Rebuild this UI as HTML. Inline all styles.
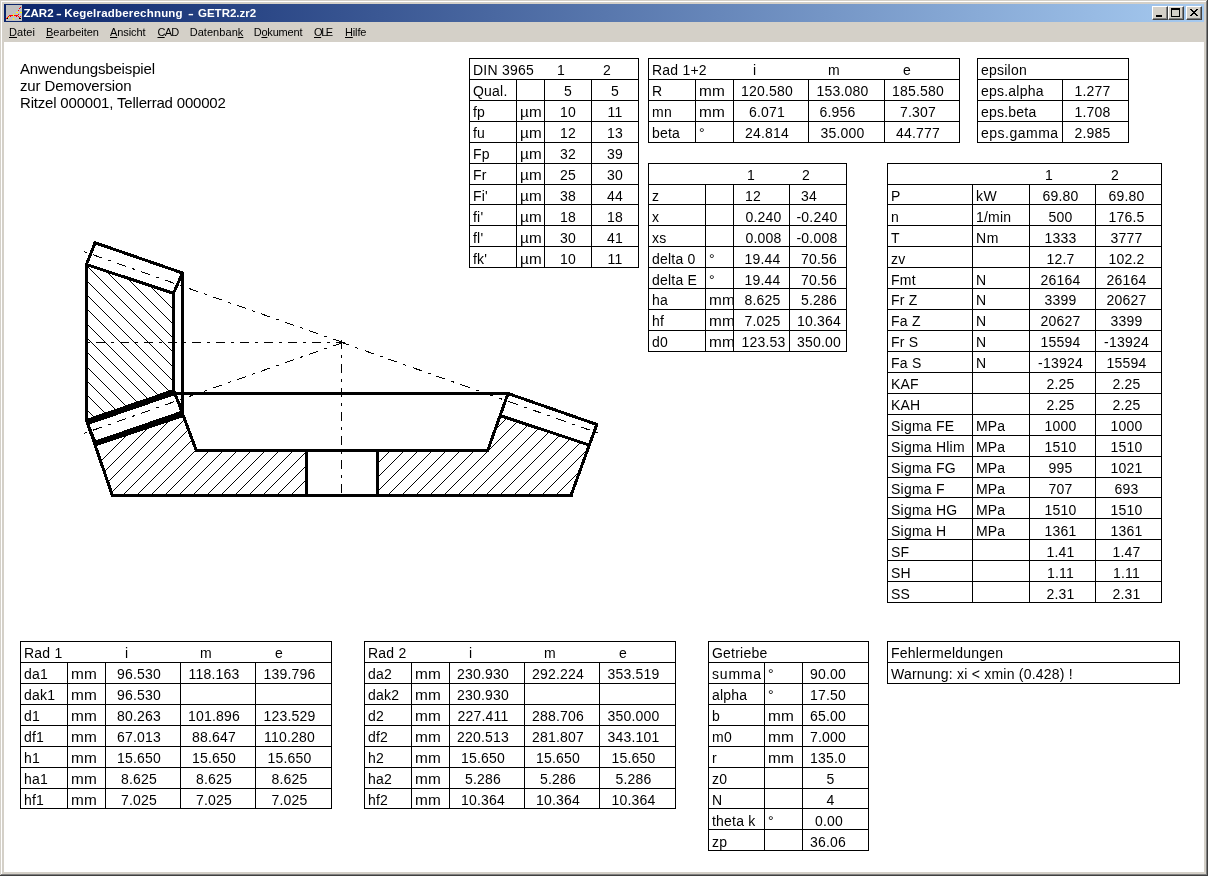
<!DOCTYPE html>
<html lang="de"><head><meta charset="utf-8"><title>ZAR2 - Kegelradberechnung - GETR2.zr2</title>
<style>
html,body{margin:0;padding:0}
body{width:1208px;height:876px;overflow:hidden;position:relative;background:#d4d0c8;font-family:"Liberation Sans",sans-serif;color:#000}
.abs,.l,.t{position:absolute}
.l{background:#000}
.t{font-size:14px;line-height:21px;height:21px;white-space:pre;letter-spacing:0.22px}
.c{transform:translateX(-50%)}
#content{position:absolute;left:0;top:0;width:1208px;height:876px;will-change:transform}
#client{position:absolute;left:4px;top:42px;width:1200px;height:830px;background:#fff}
#title{position:absolute;left:4px;top:4px;width:1200px;height:18px;background:linear-gradient(to right,#0a246a 0%,#a6caf0 100%)}
#title .cap{position:absolute;left:20px;top:0;height:18px;line-height:18px;font-size:11.5px;font-weight:bold;color:#fff;white-space:pre;letter-spacing:0.03px}
.menu{position:absolute;top:22px;height:19px;line-height:20px;font-size:11px;white-space:pre}
.menu u{text-decoration:underline;text-underline-offset:1px}
.btn{position:absolute;top:2px;width:16px;height:14px;background:#d4d0c8;box-sizing:border-box;border:1px solid;border-color:#fff #404040 #404040 #fff;box-shadow:inset -1px -1px 0 #808080}
</style></head><body>

<div class="abs" style="left:1px;top:1px;width:1205px;height:1px;background:#fff"></div>
<div class="abs" style="left:1px;top:1px;width:1px;height:873px;background:#fff"></div>
<div class="abs" style="left:1px;top:874px;width:1206px;height:1px;background:#808080"></div>
<div class="abs" style="left:1206px;top:1px;width:1px;height:874px;background:#808080"></div>
<div class="abs" style="left:0px;top:875px;width:1208px;height:1px;background:#404040"></div>
<div class="abs" style="left:1207px;top:0px;width:1px;height:876px;background:#404040"></div>
<div id="content">
<div id="title">
<svg class="abs" style="left:2px;top:1px" width="16" height="16" viewBox="0 0 16 16" shape-rendering="crispEdges"><rect width="16" height="16" fill="#c0c0c0"/><path fill="#f00" d="M14,2h1v1h-1zM13,3h1v1h-1zM12,5h1v1h-1zM12,9h1v1h-1zM3,10h1v1h-1zM4,10h1v1h-1zM5,10h1v1h-1zM6,10h1v1h-1zM8,10h1v1h-1zM9,10h1v1h-1zM10,10h1v1h-1zM11,10h1v1h-1zM2,11h1v1h-1zM4,11h1v1h-1zM10,11h1v1h-1zM12,11h1v1h-1zM14,11h1v1h-1zM1,12h1v1h-1zM13,12h1v1h-1zM0,13h1v1h-1z"/><path fill="#ff0" d="M10,7h1v1h-1zM11,7h1v1h-1zM14,7h1v1h-1zM15,7h1v1h-1zM7,9h1v1h-1zM7,10h1v1h-1zM2,12h1v1h-1zM7,13h1v1h-1zM7,14h1v1h-1z"/><path fill="#000" d="M1,13h1v1h-1zM13,13h1v1h-1zM14,13h1v1h-1z"/></svg>
<span class="cap" style="left:19.5px;letter-spacing:0px;">ZAR2</span>
<span class="cap" style="left:52.2px;letter-spacing:0px;transform:scaleX(1.5);transform-origin:0 0;">-</span>
<span class="cap" style="left:60.2px;letter-spacing:0.2px;">Kegelradberechnung</span>
<span class="cap" style="left:183.5px;letter-spacing:0px;transform:scaleX(1.5);transform-origin:0 0;">-</span>
<span class="cap" style="left:194px;letter-spacing:0px;">GETR2.zr2</span>
<div class="btn" style="left:1148px"><div class="abs" style="left:3px;top:8px;width:6px;height:2px;background:#000"></div></div>
<div class="btn" style="left:1164px"><div class="abs" style="left:2px;top:1px;width:9px;height:9px;box-sizing:border-box;border:1px solid #000;border-top-width:2px"></div></div>
<div class="btn" style="left:1182px"><svg class="abs" style="left:3px;top:2px" width="8" height="7" viewBox="0 0 8 7" shape-rendering="crispEdges"><path d="M0 0h2v1h1v1h2v-1h1v-1h2v1h-1v1h-1v1h-1v1h1v1h1v1h1v1h-2v-1h-1v-1h-2v1h-1v1h-2v-1h1v-1h1v-1h1v-1h-1v-1h-1v-1h-1z" fill="#000"/></svg></div>
</div>
<span class="menu" style="left:9px;letter-spacing:0.05px"><u>D</u>atei</span>
<span class="menu" style="left:46px;letter-spacing:-0.04px"><u>B</u>earbeiten</span>
<span class="menu" style="left:110px;letter-spacing:-0.1px"><u>A</u>nsicht</span>
<span class="menu" style="left:157.5px;letter-spacing:-0.8px"><u>C</u>AD</span>
<span class="menu" style="left:189.7px;letter-spacing:0.05px">Datenban<u>k</u></span>
<span class="menu" style="left:253.7px;letter-spacing:-0.2px">D<u>o</u>kument</span>
<span class="menu" style="left:314px;letter-spacing:-1.4px"><u>O</u>LE</span>
<span class="menu" style="left:345px;letter-spacing:-0.15px"><u>H</u>ilfe</span>
<div id="client"></div>
<span class="t" style="left:20px;top:60px;font-size:15px;line-height:17px;height:17px;letter-spacing:-0.15px">Anwendungsbeispiel</span>
<span class="t" style="left:20px;top:77px;font-size:15px;line-height:17px;height:17px;letter-spacing:-0.13px">zur Demoversion</span>
<span class="t" style="left:20px;top:94px;font-size:15px;line-height:17px;height:17px;letter-spacing:-0.19px">Ritzel 000001, Tellerrad 000002</span>
<div class="l" style="left:469px;top:58px;width:170px;height:1px"></div>
<div class="l" style="left:469px;top:79px;width:170px;height:1px"></div>
<div class="l" style="left:469px;top:100px;width:170px;height:1px"></div>
<div class="l" style="left:469px;top:121px;width:170px;height:1px"></div>
<div class="l" style="left:469px;top:142px;width:170px;height:1px"></div>
<div class="l" style="left:469px;top:163px;width:170px;height:1px"></div>
<div class="l" style="left:469px;top:184px;width:170px;height:1px"></div>
<div class="l" style="left:469px;top:204px;width:170px;height:1px"></div>
<div class="l" style="left:469px;top:225px;width:170px;height:1px"></div>
<div class="l" style="left:469px;top:246px;width:170px;height:1px"></div>
<div class="l" style="left:469px;top:267px;width:170px;height:1px"></div>
<div class="l" style="left:469px;top:58px;width:1px;height:210px"></div>
<div class="l" style="left:638px;top:58px;width:1px;height:210px"></div>
<div class="l" style="left:516px;top:79px;width:1px;height:189px"></div>
<div class="l" style="left:544px;top:79px;width:1px;height:189px"></div>
<div class="l" style="left:591px;top:79px;width:1px;height:189px"></div>
<span class="t" style="left:473px;top:60px;">DIN 3965</span>
<span class="t" style="left:557px;top:60px;">1</span>
<span class="t" style="left:603px;top:60px;">2</span>
<span class="t" style="left:473px;top:81px;">Qual.</span>
<span class="t c" style="left:568.0px;top:81px">5</span>
<span class="t c" style="left:615.0px;top:81px">5</span>
<span class="t" style="left:473px;top:102px;">fp</span>
<span class="t" style="left:520px;top:102px;transform:scaleX(1.09);transform-origin:0 0;">µm</span>
<span class="t c" style="left:568.0px;top:102px">10</span>
<span class="t c" style="left:615.0px;top:102px">11</span>
<span class="t" style="left:473px;top:123px;">fu</span>
<span class="t" style="left:520px;top:123px;transform:scaleX(1.09);transform-origin:0 0;">µm</span>
<span class="t c" style="left:568.0px;top:123px">12</span>
<span class="t c" style="left:615.0px;top:123px">13</span>
<span class="t" style="left:473px;top:144px;">Fp</span>
<span class="t" style="left:520px;top:144px;transform:scaleX(1.09);transform-origin:0 0;">µm</span>
<span class="t c" style="left:568.0px;top:144px">32</span>
<span class="t c" style="left:615.0px;top:144px">39</span>
<span class="t" style="left:473px;top:165px;">Fr</span>
<span class="t" style="left:520px;top:165px;transform:scaleX(1.09);transform-origin:0 0;">µm</span>
<span class="t c" style="left:568.0px;top:165px">25</span>
<span class="t c" style="left:615.0px;top:165px">30</span>
<span class="t" style="left:473px;top:186px;">Fi'</span>
<span class="t" style="left:520px;top:186px;transform:scaleX(1.09);transform-origin:0 0;">µm</span>
<span class="t c" style="left:568.0px;top:186px">38</span>
<span class="t c" style="left:615.0px;top:186px">44</span>
<span class="t" style="left:473px;top:207px;">fi'</span>
<span class="t" style="left:520px;top:207px;transform:scaleX(1.09);transform-origin:0 0;">µm</span>
<span class="t c" style="left:568.0px;top:207px">18</span>
<span class="t c" style="left:615.0px;top:207px">18</span>
<span class="t" style="left:473px;top:228px;">fl'</span>
<span class="t" style="left:520px;top:228px;transform:scaleX(1.09);transform-origin:0 0;">µm</span>
<span class="t c" style="left:568.0px;top:228px">30</span>
<span class="t c" style="left:615.0px;top:228px">41</span>
<span class="t" style="left:473px;top:249px;">fk'</span>
<span class="t" style="left:520px;top:249px;transform:scaleX(1.09);transform-origin:0 0;">µm</span>
<span class="t c" style="left:568.0px;top:249px">10</span>
<span class="t c" style="left:615.0px;top:249px">11</span>
<div class="l" style="left:648px;top:58px;width:312px;height:1px"></div>
<div class="l" style="left:648px;top:79px;width:312px;height:1px"></div>
<div class="l" style="left:648px;top:100px;width:312px;height:1px"></div>
<div class="l" style="left:648px;top:121px;width:312px;height:1px"></div>
<div class="l" style="left:648px;top:142px;width:312px;height:1px"></div>
<div class="l" style="left:648px;top:58px;width:1px;height:85px"></div>
<div class="l" style="left:959px;top:58px;width:1px;height:85px"></div>
<div class="l" style="left:695px;top:79px;width:1px;height:64px"></div>
<div class="l" style="left:733px;top:79px;width:1px;height:64px"></div>
<div class="l" style="left:808px;top:79px;width:1px;height:64px"></div>
<div class="l" style="left:884px;top:79px;width:1px;height:64px"></div>
<span class="t" style="left:652px;top:60px;">Rad 1+2</span>
<span class="t" style="left:753px;top:60px;">i</span>
<span class="t" style="left:828px;top:60px;">m</span>
<span class="t" style="left:903px;top:60px;">e</span>
<span class="t" style="left:652px;top:81px;">R</span>
<span class="t" style="left:699px;top:81px;transform:scaleX(1.1);transform-origin:0 0;">mm</span>
<span class="t c" style="left:767.0px;top:81px">120.580</span>
<span class="t c" style="left:842.5px;top:81px">153.080</span>
<span class="t c" style="left:918.0px;top:81px">185.580</span>
<span class="t" style="left:652px;top:102px;">mn</span>
<span class="t" style="left:699px;top:102px;transform:scaleX(1.1);transform-origin:0 0;">mm</span>
<span class="t c" style="left:767.0px;top:102px">6.071</span>
<span class="t c" style="left:837.5px;top:102px">6.956</span>
<span class="t c" style="left:918.0px;top:102px">7.307</span>
<span class="t" style="left:652px;top:123px;">beta</span>
<span class="t" style="left:699px;top:123px;">°</span>
<span class="t c" style="left:767.0px;top:123px">24.814</span>
<span class="t c" style="left:842.5px;top:123px">35.000</span>
<span class="t c" style="left:918.0px;top:123px">44.777</span>
<div class="l" style="left:977px;top:58px;width:152px;height:1px"></div>
<div class="l" style="left:977px;top:79px;width:152px;height:1px"></div>
<div class="l" style="left:977px;top:100px;width:152px;height:1px"></div>
<div class="l" style="left:977px;top:121px;width:152px;height:1px"></div>
<div class="l" style="left:977px;top:142px;width:152px;height:1px"></div>
<div class="l" style="left:977px;top:58px;width:1px;height:85px"></div>
<div class="l" style="left:1128px;top:58px;width:1px;height:85px"></div>
<div class="l" style="left:1062px;top:79px;width:1px;height:64px"></div>
<span class="t" style="left:981px;top:60px;">epsilon</span>
<span class="t" style="left:981px;top:81px;">eps.alpha</span>
<span class="t c" style="left:1092.5px;top:81px">1.277</span>
<span class="t" style="left:981px;top:102px;">eps.beta</span>
<span class="t c" style="left:1092.5px;top:102px">1.708</span>
<span class="t" style="left:981px;top:123px;letter-spacing:0.5px;">eps.gamma</span>
<span class="t c" style="left:1092.5px;top:123px">2.985</span>
<div class="l" style="left:648px;top:163px;width:199px;height:1px"></div>
<div class="l" style="left:648px;top:184px;width:199px;height:1px"></div>
<div class="l" style="left:648px;top:204px;width:199px;height:1px"></div>
<div class="l" style="left:648px;top:225px;width:199px;height:1px"></div>
<div class="l" style="left:648px;top:246px;width:199px;height:1px"></div>
<div class="l" style="left:648px;top:267px;width:199px;height:1px"></div>
<div class="l" style="left:648px;top:288px;width:199px;height:1px"></div>
<div class="l" style="left:648px;top:309px;width:199px;height:1px"></div>
<div class="l" style="left:648px;top:330px;width:199px;height:1px"></div>
<div class="l" style="left:648px;top:351px;width:199px;height:1px"></div>
<div class="l" style="left:648px;top:163px;width:1px;height:189px"></div>
<div class="l" style="left:846px;top:163px;width:1px;height:189px"></div>
<div class="l" style="left:705px;top:184px;width:1px;height:168px"></div>
<div class="l" style="left:733px;top:184px;width:1px;height:168px"></div>
<div class="l" style="left:789px;top:184px;width:1px;height:168px"></div>
<span class="t" style="left:747px;top:165px;">1</span>
<span class="t" style="left:802px;top:165px;">2</span>
<span class="t" style="left:652px;top:186px;">z</span>
<span class="t" style="left:745px;top:186px;">12</span>
<span class="t" style="left:801px;top:186px;">34</span>
<span class="t" style="left:652px;top:207px;">x</span>
<span class="t c" style="left:763.5px;top:207px">0.240</span>
<span class="t c" style="left:817.0px;top:207px">-0.240</span>
<span class="t" style="left:652px;top:228px;">xs</span>
<span class="t c" style="left:763.5px;top:228px">0.008</span>
<span class="t c" style="left:817.0px;top:228px">-0.008</span>
<span class="t" style="left:652px;top:249px;">delta 0</span>
<span class="t" style="left:709px;top:249px;width:24.00px;overflow:hidden">°</span>
<span class="t c" style="left:762.5px;top:249px">19.44</span>
<span class="t c" style="left:819.0px;top:249px">70.56</span>
<span class="t" style="left:652px;top:270px;">delta E</span>
<span class="t" style="left:709px;top:270px;width:24.00px;overflow:hidden">°</span>
<span class="t c" style="left:762.5px;top:270px">19.44</span>
<span class="t c" style="left:819.0px;top:270px">70.56</span>
<span class="t" style="left:652px;top:290px;">ha</span>
<span class="t" style="left:709px;top:290px;transform:scaleX(1.1);transform-origin:0 0;width:21.82px;overflow:hidden">mm</span>
<span class="t c" style="left:762.5px;top:290px">8.625</span>
<span class="t c" style="left:819.0px;top:290px">5.286</span>
<span class="t" style="left:652px;top:311px;">hf</span>
<span class="t" style="left:709px;top:311px;transform:scaleX(1.1);transform-origin:0 0;width:21.82px;overflow:hidden">mm</span>
<span class="t c" style="left:762.5px;top:311px">7.025</span>
<span class="t c" style="left:819.0px;top:311px">10.364</span>
<span class="t" style="left:652px;top:332px;">d0</span>
<span class="t" style="left:709px;top:332px;transform:scaleX(1.1);transform-origin:0 0;width:21.82px;overflow:hidden">mm</span>
<span class="t c" style="left:763.5px;top:332px">123.53</span>
<span class="t c" style="left:819.0px;top:332px">350.00</span>
<div class="l" style="left:887px;top:163px;width:275px;height:1px"></div>
<div class="l" style="left:887px;top:184px;width:275px;height:1px"></div>
<div class="l" style="left:887px;top:204px;width:275px;height:1px"></div>
<div class="l" style="left:887px;top:225px;width:275px;height:1px"></div>
<div class="l" style="left:887px;top:246px;width:275px;height:1px"></div>
<div class="l" style="left:887px;top:267px;width:275px;height:1px"></div>
<div class="l" style="left:887px;top:288px;width:275px;height:1px"></div>
<div class="l" style="left:887px;top:309px;width:275px;height:1px"></div>
<div class="l" style="left:887px;top:330px;width:275px;height:1px"></div>
<div class="l" style="left:887px;top:351px;width:275px;height:1px"></div>
<div class="l" style="left:887px;top:372px;width:275px;height:1px"></div>
<div class="l" style="left:887px;top:393px;width:275px;height:1px"></div>
<div class="l" style="left:887px;top:414px;width:275px;height:1px"></div>
<div class="l" style="left:887px;top:435px;width:275px;height:1px"></div>
<div class="l" style="left:887px;top:456px;width:275px;height:1px"></div>
<div class="l" style="left:887px;top:477px;width:275px;height:1px"></div>
<div class="l" style="left:887px;top:497px;width:275px;height:1px"></div>
<div class="l" style="left:887px;top:518px;width:275px;height:1px"></div>
<div class="l" style="left:887px;top:539px;width:275px;height:1px"></div>
<div class="l" style="left:887px;top:560px;width:275px;height:1px"></div>
<div class="l" style="left:887px;top:581px;width:275px;height:1px"></div>
<div class="l" style="left:887px;top:602px;width:275px;height:1px"></div>
<div class="l" style="left:887px;top:163px;width:1px;height:440px"></div>
<div class="l" style="left:1161px;top:163px;width:1px;height:440px"></div>
<div class="l" style="left:972px;top:184px;width:1px;height:419px"></div>
<div class="l" style="left:1029px;top:184px;width:1px;height:419px"></div>
<div class="l" style="left:1095px;top:184px;width:1px;height:419px"></div>
<span class="t" style="left:1045px;top:165px;">1</span>
<span class="t" style="left:1111px;top:165px;">2</span>
<span class="t" style="left:891px;top:186px;">P</span>
<span class="t" style="left:976px;top:186px;letter-spacing:0.4px;">kW</span>
<span class="t c" style="left:1060.5px;top:186px">69.80</span>
<span class="t c" style="left:1126.5px;top:186px">69.80</span>
<span class="t" style="left:891px;top:207px;">n</span>
<span class="t" style="left:976px;top:207px;">1/min</span>
<span class="t c" style="left:1060.5px;top:207px">500</span>
<span class="t c" style="left:1126.5px;top:207px">176.5</span>
<span class="t" style="left:891px;top:228px;">T</span>
<span class="t" style="left:976px;top:228px;letter-spacing:0.6px;">Nm</span>
<span class="t c" style="left:1060.5px;top:228px">1333</span>
<span class="t c" style="left:1126.5px;top:228px">3777</span>
<span class="t" style="left:891px;top:249px;">zv</span>
<span class="t c" style="left:1060.5px;top:249px">12.7</span>
<span class="t c" style="left:1126.5px;top:249px">102.2</span>
<span class="t" style="left:891px;top:270px;">Fmt</span>
<span class="t" style="left:976px;top:270px;">N</span>
<span class="t c" style="left:1060.5px;top:270px">26164</span>
<span class="t c" style="left:1126.5px;top:270px">26164</span>
<span class="t" style="left:891px;top:290px;">Fr Z</span>
<span class="t" style="left:976px;top:290px;">N</span>
<span class="t c" style="left:1060.5px;top:290px">3399</span>
<span class="t c" style="left:1126.5px;top:290px">20627</span>
<span class="t" style="left:891px;top:311px;">Fa Z</span>
<span class="t" style="left:976px;top:311px;">N</span>
<span class="t c" style="left:1060.5px;top:311px">20627</span>
<span class="t c" style="left:1126.5px;top:311px">3399</span>
<span class="t" style="left:891px;top:332px;">Fr S</span>
<span class="t" style="left:976px;top:332px;">N</span>
<span class="t c" style="left:1060.5px;top:332px">15594</span>
<span class="t c" style="left:1126.5px;top:332px">-13924</span>
<span class="t" style="left:891px;top:353px;">Fa S</span>
<span class="t" style="left:976px;top:353px;">N</span>
<span class="t c" style="left:1060.5px;top:353px">-13924</span>
<span class="t c" style="left:1126.5px;top:353px">15594</span>
<span class="t" style="left:891px;top:374px;">KAF</span>
<span class="t c" style="left:1060.5px;top:374px">2.25</span>
<span class="t c" style="left:1126.5px;top:374px">2.25</span>
<span class="t" style="left:891px;top:395px;">KAH</span>
<span class="t c" style="left:1060.5px;top:395px">2.25</span>
<span class="t c" style="left:1126.5px;top:395px">2.25</span>
<span class="t" style="left:891px;top:416px;">Sigma FE</span>
<span class="t" style="left:976px;top:416px;letter-spacing:0.1px;">MPa</span>
<span class="t c" style="left:1060.5px;top:416px">1000</span>
<span class="t c" style="left:1126.5px;top:416px">1000</span>
<span class="t" style="left:891px;top:437px;">Sigma Hlim</span>
<span class="t" style="left:976px;top:437px;letter-spacing:0.1px;">MPa</span>
<span class="t c" style="left:1060.5px;top:437px">1510</span>
<span class="t c" style="left:1126.5px;top:437px">1510</span>
<span class="t" style="left:891px;top:458px;">Sigma FG</span>
<span class="t" style="left:976px;top:458px;letter-spacing:0.1px;">MPa</span>
<span class="t c" style="left:1060.5px;top:458px">995</span>
<span class="t c" style="left:1126.5px;top:458px">1021</span>
<span class="t" style="left:891px;top:479px;">Sigma F</span>
<span class="t" style="left:976px;top:479px;letter-spacing:0.1px;">MPa</span>
<span class="t c" style="left:1060.5px;top:479px">707</span>
<span class="t c" style="left:1126.5px;top:479px">693</span>
<span class="t" style="left:891px;top:500px;">Sigma HG</span>
<span class="t" style="left:976px;top:500px;letter-spacing:0.1px;">MPa</span>
<span class="t c" style="left:1060.5px;top:500px">1510</span>
<span class="t c" style="left:1126.5px;top:500px">1510</span>
<span class="t" style="left:891px;top:521px;">Sigma H</span>
<span class="t" style="left:976px;top:521px;letter-spacing:0.1px;">MPa</span>
<span class="t c" style="left:1060.5px;top:521px">1361</span>
<span class="t c" style="left:1126.5px;top:521px">1361</span>
<span class="t" style="left:891px;top:542px;">SF</span>
<span class="t c" style="left:1060.5px;top:542px">1.41</span>
<span class="t c" style="left:1126.5px;top:542px">1.47</span>
<span class="t" style="left:891px;top:563px;">SH</span>
<span class="t c" style="left:1060.5px;top:563px">1.11</span>
<span class="t c" style="left:1126.5px;top:563px">1.11</span>
<span class="t" style="left:891px;top:584px;">SS</span>
<span class="t c" style="left:1060.5px;top:584px">2.31</span>
<span class="t c" style="left:1126.5px;top:584px">2.31</span>
<div class="l" style="left:20px;top:641px;width:312px;height:1px"></div>
<div class="l" style="left:20px;top:662px;width:312px;height:1px"></div>
<div class="l" style="left:20px;top:683px;width:312px;height:1px"></div>
<div class="l" style="left:20px;top:704px;width:312px;height:1px"></div>
<div class="l" style="left:20px;top:725px;width:312px;height:1px"></div>
<div class="l" style="left:20px;top:746px;width:312px;height:1px"></div>
<div class="l" style="left:20px;top:767px;width:312px;height:1px"></div>
<div class="l" style="left:20px;top:788px;width:312px;height:1px"></div>
<div class="l" style="left:20px;top:808px;width:312px;height:1px"></div>
<div class="l" style="left:20px;top:641px;width:1px;height:168px"></div>
<div class="l" style="left:331px;top:641px;width:1px;height:168px"></div>
<div class="l" style="left:67px;top:662px;width:1px;height:147px"></div>
<div class="l" style="left:105px;top:662px;width:1px;height:147px"></div>
<div class="l" style="left:180px;top:662px;width:1px;height:147px"></div>
<div class="l" style="left:255px;top:662px;width:1px;height:147px"></div>
<span class="t" style="left:24px;top:643px;">Rad 1</span>
<span class="t" style="left:125px;top:643px;">i</span>
<span class="t" style="left:200px;top:643px;">m</span>
<span class="t" style="left:275px;top:643px;">e</span>
<span class="t" style="left:24px;top:664px;">da1</span>
<span class="t" style="left:71px;top:664px;transform:scaleX(1.1);transform-origin:0 0;">mm</span>
<span class="t c" style="left:139.0px;top:664px">96.530</span>
<span class="t c" style="left:214.0px;top:664px">118.163</span>
<span class="t c" style="left:289.5px;top:664px">139.796</span>
<span class="t" style="left:24px;top:685px;">dak1</span>
<span class="t" style="left:71px;top:685px;transform:scaleX(1.1);transform-origin:0 0;">mm</span>
<span class="t c" style="left:139.0px;top:685px">96.530</span>
<span class="t" style="left:24px;top:706px;">d1</span>
<span class="t" style="left:71px;top:706px;transform:scaleX(1.1);transform-origin:0 0;">mm</span>
<span class="t c" style="left:139.0px;top:706px">80.263</span>
<span class="t c" style="left:214.0px;top:706px">101.896</span>
<span class="t c" style="left:289.5px;top:706px">123.529</span>
<span class="t" style="left:24px;top:727px;">df1</span>
<span class="t" style="left:71px;top:727px;transform:scaleX(1.1);transform-origin:0 0;">mm</span>
<span class="t c" style="left:139.0px;top:727px">67.013</span>
<span class="t c" style="left:214.0px;top:727px">88.647</span>
<span class="t c" style="left:289.5px;top:727px">110.280</span>
<span class="t" style="left:24px;top:748px;">h1</span>
<span class="t" style="left:71px;top:748px;transform:scaleX(1.1);transform-origin:0 0;">mm</span>
<span class="t c" style="left:139.0px;top:748px">15.650</span>
<span class="t c" style="left:214.0px;top:748px">15.650</span>
<span class="t c" style="left:289.5px;top:748px">15.650</span>
<span class="t" style="left:24px;top:769px;">ha1</span>
<span class="t" style="left:71px;top:769px;transform:scaleX(1.1);transform-origin:0 0;">mm</span>
<span class="t c" style="left:139.0px;top:769px">8.625</span>
<span class="t c" style="left:214.0px;top:769px">8.625</span>
<span class="t c" style="left:289.5px;top:769px">8.625</span>
<span class="t" style="left:24px;top:790px;">hf1</span>
<span class="t" style="left:71px;top:790px;transform:scaleX(1.1);transform-origin:0 0;">mm</span>
<span class="t c" style="left:139.0px;top:790px">7.025</span>
<span class="t c" style="left:214.0px;top:790px">7.025</span>
<span class="t c" style="left:289.5px;top:790px">7.025</span>
<div class="l" style="left:364px;top:641px;width:312px;height:1px"></div>
<div class="l" style="left:364px;top:662px;width:312px;height:1px"></div>
<div class="l" style="left:364px;top:683px;width:312px;height:1px"></div>
<div class="l" style="left:364px;top:704px;width:312px;height:1px"></div>
<div class="l" style="left:364px;top:725px;width:312px;height:1px"></div>
<div class="l" style="left:364px;top:746px;width:312px;height:1px"></div>
<div class="l" style="left:364px;top:767px;width:312px;height:1px"></div>
<div class="l" style="left:364px;top:788px;width:312px;height:1px"></div>
<div class="l" style="left:364px;top:808px;width:312px;height:1px"></div>
<div class="l" style="left:364px;top:641px;width:1px;height:168px"></div>
<div class="l" style="left:675px;top:641px;width:1px;height:168px"></div>
<div class="l" style="left:411px;top:662px;width:1px;height:147px"></div>
<div class="l" style="left:449px;top:662px;width:1px;height:147px"></div>
<div class="l" style="left:524px;top:662px;width:1px;height:147px"></div>
<div class="l" style="left:599px;top:662px;width:1px;height:147px"></div>
<span class="t" style="left:368px;top:643px;">Rad 2</span>
<span class="t" style="left:469px;top:643px;">i</span>
<span class="t" style="left:544px;top:643px;">m</span>
<span class="t" style="left:619px;top:643px;">e</span>
<span class="t" style="left:368px;top:664px;">da2</span>
<span class="t" style="left:415px;top:664px;transform:scaleX(1.1);transform-origin:0 0;">mm</span>
<span class="t c" style="left:483.0px;top:664px">230.930</span>
<span class="t c" style="left:558.0px;top:664px">292.224</span>
<span class="t c" style="left:633.5px;top:664px">353.519</span>
<span class="t" style="left:368px;top:685px;">dak2</span>
<span class="t" style="left:415px;top:685px;transform:scaleX(1.1);transform-origin:0 0;">mm</span>
<span class="t c" style="left:483.0px;top:685px">230.930</span>
<span class="t" style="left:368px;top:706px;">d2</span>
<span class="t" style="left:415px;top:706px;transform:scaleX(1.1);transform-origin:0 0;">mm</span>
<span class="t c" style="left:483.0px;top:706px">227.411</span>
<span class="t c" style="left:558.0px;top:706px">288.706</span>
<span class="t c" style="left:633.5px;top:706px">350.000</span>
<span class="t" style="left:368px;top:727px;">df2</span>
<span class="t" style="left:415px;top:727px;transform:scaleX(1.1);transform-origin:0 0;">mm</span>
<span class="t c" style="left:483.0px;top:727px">220.513</span>
<span class="t c" style="left:558.0px;top:727px">281.807</span>
<span class="t c" style="left:633.5px;top:727px">343.101</span>
<span class="t" style="left:368px;top:748px;">h2</span>
<span class="t" style="left:415px;top:748px;transform:scaleX(1.1);transform-origin:0 0;">mm</span>
<span class="t c" style="left:483.0px;top:748px">15.650</span>
<span class="t c" style="left:558.0px;top:748px">15.650</span>
<span class="t c" style="left:633.5px;top:748px">15.650</span>
<span class="t" style="left:368px;top:769px;">ha2</span>
<span class="t" style="left:415px;top:769px;transform:scaleX(1.1);transform-origin:0 0;">mm</span>
<span class="t c" style="left:483.0px;top:769px">5.286</span>
<span class="t c" style="left:558.0px;top:769px">5.286</span>
<span class="t c" style="left:633.5px;top:769px">5.286</span>
<span class="t" style="left:368px;top:790px;">hf2</span>
<span class="t" style="left:415px;top:790px;transform:scaleX(1.1);transform-origin:0 0;">mm</span>
<span class="t c" style="left:483.0px;top:790px">10.364</span>
<span class="t c" style="left:558.0px;top:790px">10.364</span>
<span class="t c" style="left:633.5px;top:790px">10.364</span>
<div class="l" style="left:708px;top:641px;width:161px;height:1px"></div>
<div class="l" style="left:708px;top:662px;width:161px;height:1px"></div>
<div class="l" style="left:708px;top:683px;width:161px;height:1px"></div>
<div class="l" style="left:708px;top:704px;width:161px;height:1px"></div>
<div class="l" style="left:708px;top:725px;width:161px;height:1px"></div>
<div class="l" style="left:708px;top:746px;width:161px;height:1px"></div>
<div class="l" style="left:708px;top:767px;width:161px;height:1px"></div>
<div class="l" style="left:708px;top:788px;width:161px;height:1px"></div>
<div class="l" style="left:708px;top:808px;width:161px;height:1px"></div>
<div class="l" style="left:708px;top:829px;width:161px;height:1px"></div>
<div class="l" style="left:708px;top:850px;width:161px;height:1px"></div>
<div class="l" style="left:708px;top:641px;width:1px;height:210px"></div>
<div class="l" style="left:868px;top:641px;width:1px;height:210px"></div>
<div class="l" style="left:764px;top:662px;width:1px;height:189px"></div>
<div class="l" style="left:802px;top:662px;width:1px;height:189px"></div>
<span class="t" style="left:712px;top:643px;">Getriebe</span>
<span class="t" style="left:712px;top:664px;letter-spacing:0.8px;">summa</span>
<span class="t" style="left:768px;top:664px;">°</span>
<span class="t c" style="left:828.0px;top:664px">90.00</span>
<span class="t" style="left:712px;top:685px;">alpha</span>
<span class="t" style="left:768px;top:685px;">°</span>
<span class="t c" style="left:828.0px;top:685px">17.50</span>
<span class="t" style="left:712px;top:706px;">b</span>
<span class="t" style="left:768px;top:706px;transform:scaleX(1.1);transform-origin:0 0;">mm</span>
<span class="t c" style="left:828.0px;top:706px">65.00</span>
<span class="t" style="left:712px;top:727px;">m0</span>
<span class="t" style="left:768px;top:727px;transform:scaleX(1.1);transform-origin:0 0;">mm</span>
<span class="t c" style="left:828.0px;top:727px">7.000</span>
<span class="t" style="left:712px;top:748px;">r</span>
<span class="t" style="left:768px;top:748px;transform:scaleX(1.1);transform-origin:0 0;">mm</span>
<span class="t c" style="left:828.0px;top:748px">135.0</span>
<span class="t" style="left:712px;top:769px;">z0</span>
<span class="t c" style="left:830.5px;top:769px">5</span>
<span class="t" style="left:712px;top:790px;">N</span>
<span class="t c" style="left:830.5px;top:790px">4</span>
<span class="t" style="left:712px;top:811px;">theta k</span>
<span class="t" style="left:768px;top:811px;">°</span>
<span class="t c" style="left:829.0px;top:811px">0.00</span>
<span class="t" style="left:712px;top:832px;">zp</span>
<span class="t c" style="left:828.0px;top:832px">36.06</span>
<div class="l" style="left:887px;top:641px;width:293px;height:1px"></div>
<div class="l" style="left:887px;top:662px;width:293px;height:1px"></div>
<div class="l" style="left:887px;top:683px;width:293px;height:1px"></div>
<div class="l" style="left:887px;top:641px;width:1px;height:43px"></div>
<div class="l" style="left:1179px;top:641px;width:1px;height:43px"></div>
<span class="t" style="left:891px;top:643px;">Fehlermeldungen</span>
<span class="t" style="left:891px;top:664px;">Warnung: xi &lt; xmin (0.428) !</span>
<svg class="abs" style="left:0;top:0" width="1208" height="876" viewBox="0 0 1208 876" shape-rendering="crispEdges" fill="none" stroke="#000">
<defs>
<clipPath id="h1"><polygon points="86.5,264.5 173.5,293.3 173.5,390.6 86.5,420.5"/></clipPath>
<clipPath id="h2"><polygon points="95.2,445 182.3,415.7 196.3,450.5 306.5,450.5 306.5,495.5 112.4,495.5"/></clipPath>
<clipPath id="h3"><polygon points="377.5,450.5 487.7,450.5 500.7,415.7 588.6,444.9 571,495.5 377.5,495.5"/></clipPath>
</defs>
<g clip-path="url(#h1)" stroke-width="0.72"><path id="ph1" d="M80,159.26L180,259.26M80,173.57L180,273.57M80,187.88L180,287.88M80,202.19L180,302.19M80,216.50L180,316.50M80,230.81L180,330.81M80,245.12L180,345.12M80,259.43L180,359.43M80,273.74L180,373.74M80,288.05L180,388.05M80,302.36L180,402.36M80,316.67L180,416.67M80,330.98L180,430.98M80,345.29L180,445.29M80,359.60L180,459.60M80,373.91L180,473.91M80,388.22L180,488.22M80,402.53L180,502.53M80,416.84L180,516.84M80,431.15L180,531.15M80,445.46L180,545.46M80,459.77L180,559.77M80,474.08L180,574.08M80,488.39L180,588.39"/><use href="#ph1"/><use href="#ph1"/><use href="#ph1"/></g>
<g clip-path="url(#h2)" stroke-width="0.72"><path id="ph2" d="M62.02,500L162.02,400M76.04,500L176.04,400M90.06,500L190.06,400M104.08,500L204.08,400M118.10,500L218.10,400M132.12,500L232.12,400M146.14,500L246.14,400M160.16,500L260.16,400M174.18,500L274.18,400M188.20,500L288.20,400M202.22,500L302.22,400M216.24,500L316.24,400M230.26,500L330.26,400M244.28,500L344.28,400M258.30,500L358.30,400M272.32,500L372.32,400M286.34,500L386.34,400M300.36,500L400.36,400M314.38,500L414.38,400M328.40,500L428.40,400M342.42,500L442.42,400M356.44,500L456.44,400M370.46,500L470.46,400M384.48,500L484.48,400"/><use href="#ph2"/><use href="#ph2"/><use href="#ph2"/></g>
<g clip-path="url(#h3)" stroke-width="0.72"><path id="ph3" d="M327.27,500L427.27,400M341.24,500L441.24,400M355.21,500L455.21,400M369.18,500L469.18,400M383.15,500L483.15,400M397.12,500L497.12,400M411.09,500L511.09,400M425.06,500L525.06,400M439.03,500L539.03,400M453.00,500L553.00,400M466.97,500L566.97,400M480.94,500L580.94,400M494.91,500L594.91,400M508.88,500L608.88,400M522.85,500L622.85,400M536.82,500L636.82,400M550.79,500L650.79,400M564.76,500L664.76,400M578.73,500L678.73,400M592.70,500L692.70,400M606.67,500L706.67,400M620.64,500L720.64,400M634.61,500L734.61,400M648.58,500L748.58,400"/><use href="#ph3"/><use href="#ph3"/><use href="#ph3"/></g>
<path stroke-width="1" stroke-dasharray="9 6 3 6" d="M344.5,342.5L86,342.5"/>
<path stroke-width="1" stroke-dasharray="9 6 3 6" d="M341.5,340L341.5,494"/>
<path stroke-width="1" stroke-dasharray="9.544 6.363 3.181 6.363" d="M342.2,342.25L84,251.62"/>
<path stroke-width="1" stroke-dasharray="9.544 6.363 3.181 6.363" d="M342.2,342.75L84,433.38"/>
<path stroke-width="1" stroke-dasharray="9.544 6.363 3.181 6.363" d="M340.5,342.15L341.5,342.5L600,433.74"/>
<path stroke-width="3" stroke-linecap="square" stroke-linejoin="miter" d="M95,242.7L182.5,273M86.5,264.5L173.5,293.3M95,242.7L86.5,264.5M182.5,273L173.5,293.3M95,442.3L182.5,412M86.5,420.5L173.5,390.6M95,442.3L86.5,420.5M182.5,412L173.5,390.6M86.5,264.5L86.5,420.5M173.5,293.3L173.5,390.6M182.5,273L182.5,412M508,393.5L596.8,424.5M500.7,415.7L588.6,444.9M508,393.5L487.7,450.5M175,393.5L87.4,423.6M182.3,415.7L95.2,445M175,393.5L196.3,450.5M596.8,424.5L571,495.5M87.3,422.5L112.4,495.5M175,393.5L508,393.5M196.3,450.5L487.7,450.5M112.4,495.5L571,495.5M86.95,422.05L174.25,392.05M95.1,443.65L182.4,413.85M306.5,450.5L306.5,495.5M377.5,450.5L377.5,495.5"/>
</svg>
</div>
</body></html>
